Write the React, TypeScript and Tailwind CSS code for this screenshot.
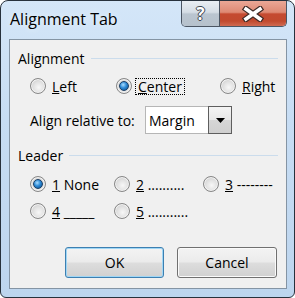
function Radio({ checked }: { checked?: boolean }) {
  return (
    <span className="flex h-[16px] w-[16px] shrink-0 items-center justify-center rounded-full border border-[#878787] bg-[radial-gradient(circle_at_55%_60%,#f7f7f7_0%,#e2e2e2_45%,#c4c4c4_100%)] shadow-[inset_0_0_0_1px_#f2f2f2]">
      {checked && (
        <span className="h-[10px] w-[10px] rounded-full border border-[#1b3f66] bg-[radial-gradient(circle_at_40%_35%,#a8dcff_0%,#2d8ad6_45%,#0d4a86_100%)]" />
      )}
    </span>
  );
}

function Option({ checked, children, className }: { checked?: boolean; children: React.ReactNode; className?: string }) {
  return (
    <div className={`flex items-center gap-[6px] ${className ?? ""}`}>
      <Radio checked={checked} />
      {children}
    </div>
  );
}

function GroupLabel({ text }: { text: string }) {
  return (
    <div className="flex h-[18px] items-center gap-[6px]">
      <span>{text}</span>
      <div className="h-px flex-1 bg-[#cbdcec]" />
    </div>
  );
}

function Button({ label, primary }: { label: string; primary?: boolean }) {
  return (
    <button
      className={`h-[31px] rounded-[3px] border bg-[linear-gradient(to_bottom,#f3f3f3_0%,#ebebeb_48%,#dddddd_52%,#d0d0d0_100%)] text-[14px] text-black ${
        primary ? "w-[99px] border-[#3c7fb1] shadow-[inset_0_0_0_1px_#9fd6f5]" : "w-[100px] border-[#707070] shadow-[inset_0_0_0_1px_#fafafa]"
      }`}
    >
      {label}
    </button>
  );
}

export default function App() {
  return (
    <div className="h-[298px] w-[295px] font-['Open_Sans',sans-serif] text-[14px] text-black">
      <div className="flex h-[298px] w-[295px] flex-col rounded-t-[8px] rounded-b-[6px] border border-[#27313c] bg-[linear-gradient(to_bottom,#d4e6f8_0%,#c7ddf4_40%,#bdd5ee_100%)] pb-[8px] pl-[8px] pr-[7px]">
        <div className="flex h-[38px] items-start justify-between">
          <span className="pl-[1px] pt-[7px] text-[16px] leading-[22px] [text-shadow:0_0_6px_#eef6ff]">Alignment Tab</span>
          <div className="flex h-[26px] overflow-hidden rounded-b-[5px] border border-t-0 border-[#4b5563]">
            <div className="flex w-[38px] items-center justify-center border-r border-[#4b5563] bg-[linear-gradient(to_bottom,#e9eef3_0%,#d5dde5_45%,#bac5d0_52%,#b6c1cc_100%)] pb-[1px] text-[17px] font-bold leading-none text-white [text-shadow:1px_0_#3d4650,-1px_0_#3d4650,0_1px_#3d4650,0_-1px_#3d4650]">
              ?
            </div>
            <div className="flex w-[66px] items-center justify-center bg-[linear-gradient(to_bottom,#eaa796_0%,#de8a74_45%,#c54a30_52%,#c14a2f_80%,#d06a52_100%)]">
              <svg width="22" height="16" viewBox="0 0 22 16">
                <path d="M4 3 L18 13 M18 3 L4 13" stroke="#3d2a26" strokeWidth="6" strokeLinecap="square" />
                <path d="M4 3 L18 13 M18 3 L4 13" stroke="#ffffff" strokeWidth="3.6" strokeLinecap="square" />
              </svg>
            </div>
          </div>
        </div>

        <div className="flex flex-1 flex-col border border-[#8494a4] bg-[#f0f0f0] px-[8px] pt-[9px]">
          <GroupLabel text="Alignment" />
          <div className="mt-[9px] flex h-[20px] items-center pl-[12px]">
            <Option className="w-[86px]">
              <span><span className="underline">L</span>eft</span>
            </Option>
            <Option checked className="w-[104px]">
              <span className="-ml-[3px] border border-dotted border-black px-[2px] leading-[15px]">
                <span className="underline">C</span>enter
              </span>
            </Option>
            <Option>
              <span><span className="underline">R</span>ight</span>
            </Option>
          </div>
          <div className="mt-[10px] flex h-[28px] items-center pl-[12px]">
            <span className="w-[115px]">Align relative to:</span>
            <div className="flex h-[28px] w-[87px] border border-[#b6b6b6] bg-white">
              <span className="flex flex-1 items-center pl-[3px]">Margin</span>
              <div className="-my-px -mr-px flex w-[24px] items-center justify-center border border-[#5e5e5e] bg-[linear-gradient(to_bottom,#f4f4f4_0%,#e8e8e8_48%,#d6d6d6_52%,#cfcfcf_100%)]">
                <svg width="9" height="5" viewBox="0 0 9 5">
                  <path d="M0 0 H9 L4.5 5 Z" fill="#000" />
                </svg>
              </div>
            </div>
          </div>

          <div className="mt-[12px]">
            <GroupLabel text="Leader" />
          </div>
          <div className="mt-[10px] flex h-[20px] items-center pl-[12px]">
            <Option checked className="w-[84px]">
              <span><span className="underline">1</span> None</span>
            </Option>
            <Option className="w-[89px]">
              <span><span className="underline">2</span> ..........</span>
            </Option>
            <Option>
              <span><span className="underline">3</span> --------</span>
            </Option>
          </div>
          <div className="mt-[7px] flex h-[20px] items-center pl-[12px]">
            <Option className="w-[84px]">
              <span><span className="underline">4</span> _____</span>
            </Option>
            <Option>
              <span><span className="underline">5</span> ...........</span>
            </Option>
          </div>

          <div className="mt-[26px] flex justify-end gap-[13px] pr-[1px]">
            <Button label="OK" primary />
            <Button label="Cancel" />
          </div>
        </div>
      </div>
    </div>
  );
}
